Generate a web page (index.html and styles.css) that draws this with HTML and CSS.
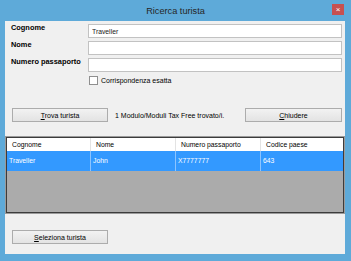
FILE: index.html
```html
<!DOCTYPE html>
<html lang="it">
  <head>
    <meta charset="UTF-8" />
    <title>Ricerca turista</title>
    <link rel="stylesheet" href="styles.css">
  </head>
  <body>
    <div class="titlebar">
      <span></span>
      <div class="title">Ricerca turista</div>
      <button class="close" title="Chiudi">&#215;</button>
    </div>

    <div class="client">
      <div class="search">
        <label class="field-label" for="surname">Cognome</label>
        <input class="field" id="surname" type="text" value="Traveller">
        <label class="field-label" for="name">Nome</label>
        <input class="field" id="name" type="text">
        <label class="field-label" for="passport">Numero passaporto</label>
        <input class="field" id="passport" type="text">
        <label class="exact"><span class="check"></span>Corrispondenza esatta</label>
      </div>

      <div class="actions">
        <button class="btn"><u>T</u>rova turista</button>
        <span class="status">1 Modulo/Moduli Tax Free trovato/i.</span>
        <button class="btn btn-right"><u>C</u>hiudere</button>
      </div>

      <div class="results">
        <div class="grid-row grid-head">
          <div class="cell">Cognome</div>
          <div class="cell">Nome</div>
          <div class="cell">Numero passaporto</div>
          <div class="cell">Codice paese</div>
        </div>
        <div class="grid-row grid-selected">
          <div class="cell">Traveller</div>
          <div class="cell">John</div>
          <div class="cell">X7777777</div>
          <div class="cell">643</div>
        </div>
      </div>

      <div class="footer">
        <button class="btn"><u>S</u>eleziona turista</button>
      </div>
    </div>
  </body>
</html>
```

FILE: styles.css
```css
body {
  margin: 0;
  width: 351px;
  height: 261px;
  box-sizing: border-box;
  background: #5eaad9;
  font-family: "Liberation Sans", Arial, sans-serif;
  font-size: 7px;
  color: #000;
  display: flex;
  flex-direction: column;
  overflow: hidden;
}
.titlebar {
  height: 21px;
  display: grid;
  grid-template-columns: 1fr auto 1fr;
  flex-shrink: 0;
}
.title {
  font-size: 9.2px;
  line-height: 22px;
  color: #262626;
}
.close {
  justify-self: end;
  margin: 4px 7px 0 0;
  width: 12px;
  height: 11px;
  padding: 0;
  border: none;
  background: #c75050;
  color: #fff;
  font-size: 8px;
  line-height: 10px;
  font-family: "Liberation Sans", Arial, sans-serif;
}
.client {
  flex: 1;
  margin: 0 6px 7px 5px;
  background: #f0f0f0;
  display: flex;
  flex-direction: column;
}
.search {
  display: grid;
  grid-template-columns: 77px 1fr;
  row-gap: 3px;
  padding: 3px 3px 0 6px;
}
.field-label {
  font-weight: bold;
  font-size: 7.4px;
  line-height: 8px;
}
.field {
  height: 14px;
  box-sizing: border-box;
  margin: 0;
  border: 1px solid #c2c2c2;
  background: #fff;
  padding: 0 0 0 3px;
  font-family: "Liberation Sans", Arial, sans-serif;
  font-size: 6.8px;
  color: #1a1a1a;
}
.exact {
  grid-column: 2;
  display: flex;
  align-items: center;
  gap: 3px;
  margin: 1px 0 0 1px;
  height: 9px;
  font-size: 7px;
}
.check {
  width: 9px;
  height: 9px;
  box-sizing: border-box;
  border: 1px solid #8f8f8f;
  background: #fff;
}
.actions {
  display: flex;
  align-items: center;
  margin-top: 23px;
  padding: 0 3px 0 7px;
}
.btn {
  width: 96px;
  height: 14px;
  box-sizing: border-box;
  padding: 0;
  border: 1px solid #acacac;
  background: linear-gradient(#f2f2f2, #e3e3e3);
  font-family: "Liberation Sans", Arial, sans-serif;
  font-size: 7px;
  color: #000;
}
.status {
  margin-left: 7px;
  font-size: 7px;
}
.btn-right {
  margin-left: auto;
  width: 97px;
}
.results {
  margin-top: 14px;
  height: 78px;
  box-sizing: border-box;
  border: 1px solid #9a9a9a;
  box-shadow: inset 0 0 0 1px #3c3c3c;
  padding: 1px;
  background: #ababab;
}
.grid-row {
  display: grid;
  grid-template-columns: 84px 85px 85px 1fr;
}
.grid-head {
  height: 13px;
  background: #fff;
  font-size: 6.8px;
  line-height: 13px;
}
.grid-head .cell {
  padding-left: 5px;
  border-right: 1px solid #e3e3e3;
}
.grid-selected {
  height: 20px;
  background: #3399ff;
  color: #fff;
  font-size: 6.8px;
  line-height: 19px;
}
.grid-selected .cell {
  padding-left: 2px;
  border-right: 1px solid #8cc4ff;
}
.cell:last-child {
  border-right: none;
}
.footer {
  margin-top: 16px;
  padding: 0 7px;
}
```
